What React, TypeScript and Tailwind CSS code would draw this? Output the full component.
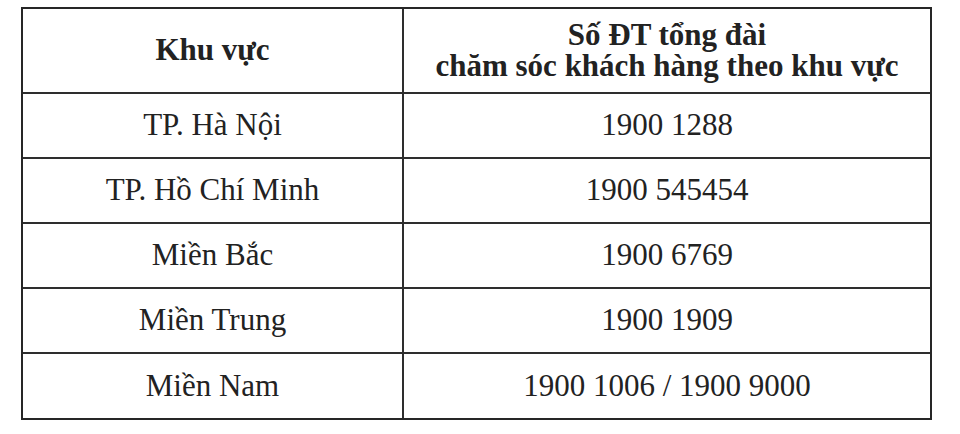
const ROWS: [string, string][] = [
  ["TP. Hà Nội", "1900 1288"],
  ["TP. Hồ Chí Minh", "1900 545454"],
  ["Miền Bắc", "1900 6769"],
  ["Miền Trung", "1900 1909"],
  ["Miền Nam", "1900 1006 / 1900 9000"],
];

export default function App() {
  return (
    <div className="min-h-[434px] w-[960px] bg-white pl-[21px] pt-[7px] font-['Liberation_Serif','Times_New_Roman',serif] text-[31px] text-[#222]">
      <div className="grid w-[911px] grid-cols-[381px_1fr] border-2 border-[#262626]">
        <div className="flex h-[85px] items-center justify-center border-r-2 border-b-2 border-[#2e2e2e] font-bold">
          Khu vực
        </div>
        <div className="flex h-[85px] flex-col items-center justify-center border-b-2 border-[#2e2e2e] pb-[2px] text-center font-bold leading-[31px]">
          <span>Số ĐT tổng đài</span>
          <span>chăm sóc khách hàng theo khu vực</span>
        </div>
        {ROWS.map(([area, phone], i) => {
          const last = i === ROWS.length - 1;
          return [
            <div
              key={`a${i}`}
              className={`flex items-center justify-center border-r-2 border-[#2e2e2e] ${last ? "h-[64px]" : "h-[65px] border-b-2"}`}
            >
              {area}
            </div>,
            <div
              key={`p${i}`}
              className={`flex items-center justify-center border-[#2e2e2e] ${last ? "h-[64px]" : "h-[65px] border-b-2"}`}
            >
              {phone}
            </div>,
          ];
        })}
      </div>
    </div>
  );
}
